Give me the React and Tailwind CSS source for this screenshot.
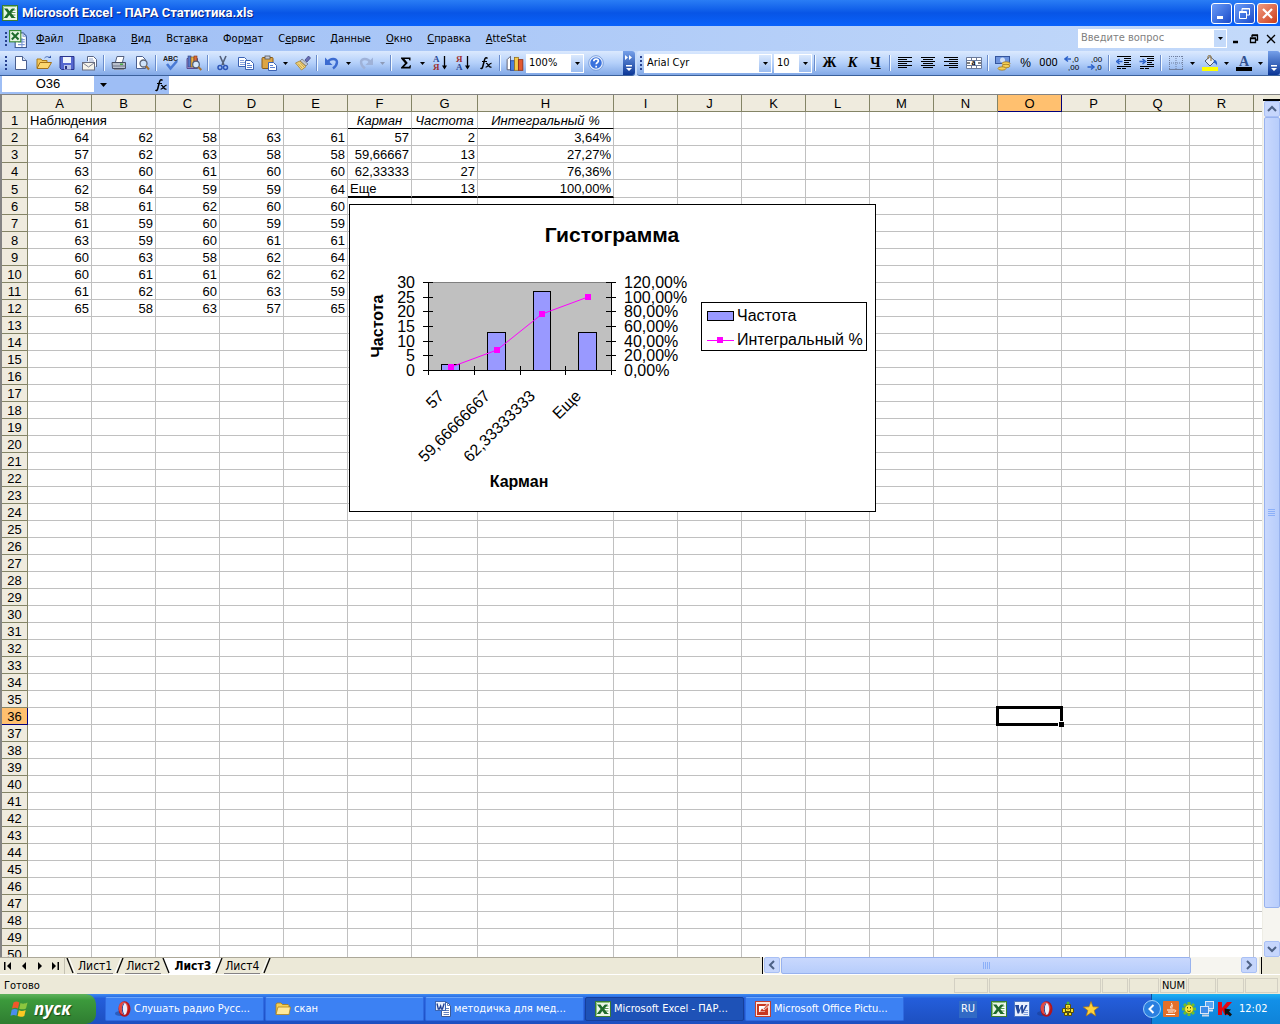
import React from 'react';

const COLUMNS = 'ABCDEFGHIJKLMNOPQRS'.split('');
const ROW_COUNT = 50;
const ACTIVE = { col: 'O', row: 36 };

const observations = [
  [64, 62, 58, 63, 61],
  [57, 62, 63, 58, 58],
  [63, 60, 61, 60, 60],
  [62, 64, 59, 59, 64],
  [58, 61, 62, 60, 60],
  [61, 59, 60, 59, 59],
  [63, 59, 60, 61, 61],
  [60, 63, 58, 62, 64],
  [60, 61, 61, 62, 62],
  [61, 62, 60, 63, 59],
  [65, 58, 63, 57, 65],
];

const frequencies = [
  { F: '57', G: '2', H: '3,64%' },
  { F: '59,66667', G: '13', H: '27,27%' },
  { F: '62,33333', G: '27', H: '76,36%' },
  { F: 'Еще', G: '13', H: '100,00%' },
];

const cellValue = (col, row) => {
  if (row === 1) {
    return { A: 'Наблюдения', F: 'Карман', G: 'Частота', H: 'Интегральный %' }[col];
  }
  const index = COLUMNS.indexOf(col);
  if (index < 5) return observations[row - 2]?.[index];
  return frequencies[row - 2]?.[col];
};

const menuItems = [
  ['', 'Ф', 'айл'],
  ['', 'П', 'равка'],
  ['', 'В', 'ид'],
  ['Вст', 'а', 'вка'],
  ['Фор', 'м', 'ат'],
  ['С', 'е', 'рвис'],
  ['', 'Д', 'анные'],
  ['', 'О', 'кно'],
  ['', 'С', 'правка'],
  ['', 'A', 'tteStat'],
];

/* ---------- icons ---------- */

const Svg = ({ size = 16, children }) => (
  <svg width={size} height={size} viewBox="0 0 16 16" className="shrink-0" aria-hidden="true">
    {children}
  </svg>
);

const ExcelIcon = ({ size }) => (
  <Svg size={size}>
    <rect x="0.5" y="0.5" width="15" height="15" fill="#e9f5e4" stroke="#3a7d34" />
    <path d="M1.5 14.500V1.500H14.500" fill="none" stroke="#8cc57f" />
    <path d="M9 3h5v10H9z" fill="#fff" />
    <path d="M9.500 5h4M9.500 7.500h4M9.500 10h4M9.500 12.500h4" stroke="#5b9f52" />
    <path d="M2 3.500h3.500l2 2.800L9.800 3.500h3.200L9.300 8l3.900 5H9.600L7.300 9.900 5.200 13H1.800L5.600 8z" fill="#1f6b2b" />
  </Svg>
);

const WordIcon = () => (
  <Svg>
    <rect x="0.5" y="0.5" width="15" height="15" fill="#e8f0fd" stroke="#4a76c4" />
    <path d="M1 4l2.500 8.500h1.500L7 7l.5 5.500H9L13.500 4h-2L9 9V4H7.500L5 9V4z" fill="#23489c" />
    <path d="M11 9.500h3M10 11.500h4M9.500 13.500h4.500" stroke="#7f9fdc" />
  </Svg>
);

const WordDocIcon = () => (
  <Svg>
    <path d="M6.500 1.500h6l3 3v11h-9z" fill="#fff" stroke="#3d5a94" />
    <path d="M12.500 1.500v3h3M11 7.500h3M11 9.500h3M8.500 11.500h5.500M8.500 13.500h5.500" fill="none" stroke="#6482bd" />
    <rect x="0.5" y="0.500" width="10" height="9" fill="#e9f0fc" stroke="#3a66b5" />
    <path d="M2 2.500l1.300 5.500h1l1.300-3 .8 3h1L9.200 2.500" fill="none" stroke="#1e3f94" strokeWidth="1.300" />
  </Svg>
);

const SheetDocIcon = () => (
  <Svg size={18}>
    <path d="M5.500 2.500h7l3 3v10h-10z" fill="#fff" stroke="#3f5b91" />
    <path d="M12.500 2.500v3h3M8 8.500h6M8 10.500h6M8 13h6M11.500 7v8" fill="none" stroke="#7b99d6" />
    <rect x="0.5" y="0.5" width="10" height="10" fill="#e6f4e1" stroke="#3a8a35" />
    <path d="M2.500 2.500l6 6M8.500 2.500l-6 6" stroke="#1f6b2b" strokeWidth="1.800" />
  </Svg>
);

const OperaIcon = () => (
  <Svg>
    <ellipse cx="5.500" cy="12.500" rx="5.500" ry="2.500" fill="#17398c" opacity="0.500" />
    <ellipse cx="9.500" cy="8" rx="6" ry="7.700" fill="#b3161b" />
    <ellipse cx="8.500" cy="7" rx="4.800" ry="6.300" fill="#e34a43" />
    <ellipse cx="9.500" cy="8" rx="2.600" ry="6" fill="#e9eefc" />
    <path d="M9.500 2a2.600 6 0 0 0 0 12 5 8 0 0 1 0-12z" fill="#2b3c86" />
  </Svg>
);

const FolderIcon = () => (
  <Svg>
    <path d="M1 13V3.500l1-1.500h4l1.500 1.500H13l1 1V6" fill="#f3cf57" stroke="#a97a12" strokeWidth="0.800" />
    <path d="M1 13.500L3 6h12.500L14 13.500z" fill="#ffe89a" stroke="#b38519" strokeWidth="0.800" />
  </Svg>
);

const PictureManagerIcon = () => (
  <Svg>
    <rect x="0.5" y="0.5" width="15" height="15" fill="#fbe3de" stroke="#c2402f" />
    <rect x="2" y="3" width="11" height="11" fill="#c8371f" />
    <rect x="4" y="5" width="6" height="6" fill="#fff" />
    <path d="M5 10.500l2-3 1.500 1.500L10 7v3.500z" fill="#c8371f" />
    <path d="M8 8l5-6 2 2-6 5z" fill="#d9634f" stroke="#fff" strokeWidth="0.700" />
  </Svg>
);

const NewIcon = () => (
  <Svg>
    <path d="M2.500 1.500h7l4 4v9h-11z" fill="#fff" stroke="#4a5f8f" />
    <path d="M9.500 1.500v4h4" fill="#d4e1f8" stroke="#4a5f8f" />
  </Svg>
);

const OpenIcon = () => (
  <Svg>
    <path d="M1 13V4h4l1 1.500h5V8" fill="#f5c95c" stroke="#a77a1b" />
    <path d="M1 13.500L4 7.500h11.500L12 13.500z" fill="#fbd66f" stroke="#a3701a" />
    <path d="M8.500 3c2-2 4-1.500 5 0" fill="none" stroke="#4a6db5" />
    <path d="M12 3h3V0.500z" fill="#3459a8" />
  </Svg>
);

const SaveIcon = () => (
  <Svg>
    <path d="M1 1.500h14v13H2.500L1 13z" fill="#5567cf" stroke="#2a348c" />
    <rect x="4" y="2" width="8" height="6" fill="#eef3fd" />
    <rect x="5" y="10" width="7" height="4.500" fill="#b9c4ea" />
    <rect x="6" y="11" width="2" height="3" fill="#26307f" />
  </Svg>
);

const MailIcon = () => (
  <Svg>
    <path d="M5.500 6V1.500h6l3 3V12" fill="#fff" stroke="#5a6684" />
    <rect x="0.5" y="7.500" width="12" height="7.500" fill="#f6f4ea" stroke="#6b6f80" />
    <path d="M1 8l5.500 4L12 8" fill="none" stroke="#7d8296" />
    <path d="M7 4h4M7 6h5" stroke="#96a7cc" />
  </Svg>
);

const PrintIcon = () => (
  <Svg>
    <path d="M4.500 7l1.500-5.500h7L11.500 7" fill="#fff" stroke="#55617f" />
    <path d="M1 7.500h13.500v6h-13z" fill="#b9c0cc" stroke="#454d61" />
    <path d="M1.500 11h13" stroke="#6c7588" />
    <rect x="9" y="8.500" width="3" height="1.500" fill="#4ba946" />
    <path d="M3 14.500h10" stroke="#8a90a0" />
  </Svg>
);

const PreviewIcon = () => (
  <Svg>
    <path d="M2.500 1.500h6l3 3v9h-9z" fill="#fff" stroke="#4a5f8f" />
    <circle cx="9.500" cy="8.500" r="3.500" fill="#cfe3fa" stroke="#5a6477" strokeWidth="1.300" />
    <path d="M12 11l3 3.500" stroke="#a8712c" strokeWidth="2" />
  </Svg>
);

const SpellingIcon = () => (
  <Svg>
    <text x="0" y="6" fontSize="7" fontWeight="bold" fill="#222" fontFamily="Liberation Sans, sans-serif">ABC</text>
    <path d="M4 9l3.500 4.500L14 6" fill="none" stroke="#4a7bd6" strokeWidth="2.600" />
  </Svg>
);

const ResearchIcon = () => (
  <Svg>
    <path d="M1 3.500h10.500v10H1z" fill="#b9a4dc" stroke="#5b4a8d" />
    <rect x="2" y="1" width="3" height="11" fill="#5978c8" stroke="#2c3f80" strokeWidth="0.600" />
    <rect x="5" y="2" width="3" height="10" fill="#e7b44c" stroke="#80530f" strokeWidth="0.600" />
    <rect x="8" y="1" width="3" height="10" fill="#d86a3a" stroke="#803413" strokeWidth="0.600" />
    <circle cx="10" cy="9.500" r="3.300" fill="#d7e8fa" stroke="#4f5d77" strokeWidth="1.200" />
    <path d="M12.300 12l3 3" stroke="#a8712c" strokeWidth="2" />
  </Svg>
);

const CutIcon = () => (
  <Svg>
    <path d="M5 1l4 9M11 1L7 10" stroke="#53607a" strokeWidth="1.600" />
    <circle cx="5" cy="12.500" r="2" fill="none" stroke="#2c55b8" strokeWidth="1.500" />
    <circle cx="10.500" cy="12.500" r="2" fill="none" stroke="#2c55b8" strokeWidth="1.500" />
  </Svg>
);

const CopyIcon = () => (
  <Svg>
    <path d="M0.500 2.500h6l2 2v7h-8z" fill="#fff" stroke="#3c63b3" />
    <path d="M2 5.500h4M2 7.500h5M2 9.500h5" stroke="#86a3de" />
    <path d="M7.500 5.500h5l3 3v6h-8z" fill="#fff" stroke="#3c63b3" />
    <path d="M9 8.500h3M9 10.500h5M9 12.500h5" stroke="#5b82d0" />
  </Svg>
);

const PasteIcon = () => (
  <Svg>
    <rect x="1" y="2.500" width="11" height="11" rx="1" fill="#dda544" stroke="#8a5d18" />
    <rect x="4" y="1" width="5" height="3" fill="#c9ccd5" stroke="#555" strokeWidth="0.800" />
    <path d="M7.500 7.500h5l3 3v5h-8z" fill="#fff" stroke="#3c63b3" />
    <path d="M9 10.500h3M9 12.500h5" stroke="#5b82d0" />
  </Svg>
);

const BrushIcon = () => (
  <Svg>
    <path d="M10 5l3.500-4L15.500 3 12 7z" fill="#6a6fb5" stroke="#3a3f7d" strokeWidth="0.700" />
    <path d="M7 4l6 5-2 2-6-5z" fill="#c0c5cf" stroke="#666c7c" strokeWidth="0.700" />
    <path d="M5 6l6 5.500L6.500 15 0.500 8z" fill="#f3d680" stroke="#a37f2c" strokeWidth="0.800" />
    <path d="M3 8.500l4 4.500M5 7.500l4 4.500" stroke="#c9a34b" />
  </Svg>
);

const UndoIcon = () => (
  <Svg>
    <path d="M4 7c2-4 9-4 9 0 0 3-2 5-4 6.500" fill="none" stroke="#3c6bd0" strokeWidth="2.400" />
    <path d="M1 2.500v7.500h7.500z" fill="#3c6bd0" />
  </Svg>
);

const RedoIcon = () => (
  <Svg>
    <path d="M12 7C10 3 3 3 3 7c0 3 2 5 4 6.500" fill="none" stroke="#9fb2d8" strokeWidth="2.400" />
    <path d="M15 2.500v7.500H7.500z" fill="#9fb2d8" />
  </Svg>
);

const SumIcon = () => (
  <Svg>
    <path d="M3 2.500h9.500v3h-1L10.700 4H6.500L9.800 8l-3.800 3.800h5l1-1.600h1l-.5 3.300H3v-1L7 8.300 3 3.500z" fill="#000" />
  </Svg>
);

const SortIcon = ({ top, bottom, topFill, bottomFill }) => (
  <Svg>
    <text x="1" y="7" fontSize="9" fontWeight="bold" fill={topFill} fontFamily="Liberation Serif, serif">{top}</text>
    <text x="1" y="15" fontSize="9" fontWeight="bold" fill={bottomFill} fontFamily="Liberation Serif, serif">{bottom}</text>
    <path d="M12.500 1v12" stroke="#000" strokeWidth="1.300" />
    <path d="M10 10.500h5l-2.500 4z" fill="#000" />
  </Svg>
);

const ChartIcon = () => (
  <Svg size={18}>
    <path d="M1 5l3-3v12H1z" fill="#fff" stroke="#556" strokeWidth="0.800" />
    <rect x="4" y="6" width="3.500" height="8.500" fill="#4d7fdb" stroke="#1e3f94" strokeWidth="0.700" />
    <rect x="7.500" y="3" width="3.500" height="11.500" fill="#f6cb4b" stroke="#94701a" strokeWidth="0.700" />
    <rect x="11" y="5" width="4" height="9.500" fill="#e3582f" stroke="#8a2a10" strokeWidth="0.700" />
  </Svg>
);

const HelpIcon = () => (
  <Svg>
    <circle cx="8" cy="8" r="6.500" fill="#3a72dd" stroke="#e8f1ff" strokeWidth="1.500" />
    <circle cx="8" cy="8" r="7.300" fill="none" stroke="#5d86cf" strokeWidth="0.700" />
    <path d="M5.800 6.300c0-3 4.600-3 4.600-.3 0 1.500-2.200 1.600-2.200 3.300M8.200 10.800v1.700" fill="none" stroke="#fff" strokeWidth="1.700" />
  </Svg>
);

const FunctionIcon = () => (
  <Svg>
    <path d="M9.500 3.500C8 2 7 3 6.500 5L4.800 11.500C4.300 13.500 3.500 14 2.500 13" fill="none" stroke="#000" strokeWidth="1.500" />
    <path d="M4 6.500h5" stroke="#000" />
    <path d="M8 8.500c2.500-1 2 5 5.500 3.500M13.500 8.500c-2-.5-3.500 4-5.800 3.500" fill="none" stroke="#000" strokeWidth="1.300" />
  </Svg>
);

const AlignIcon = ({ d }) => (
  <Svg>
    <path d={d} stroke="#000" />
  </Svg>
);

const MergeIcon = () => (
  <Svg>
    <path d="M0.500 2.500h15v11h-15zM0.500 5.500h15M0.500 10.500h15M5.500 2.500v3M10.500 2.500v3M5.500 10.500v3M10.500 10.500v3" fill="#fff" stroke="#6b7a99" />
    <text x="5.500" y="10" fontSize="8" fontWeight="bold" fontFamily="Liberation Serif, serif">a</text>
    <path d="M1 8h3M12 8h3" stroke="#000" />
  </Svg>
);

const CurrencyIcon = () => (
  <Svg>
    <rect x="0.5" y="1.500" width="14" height="7" fill="#6f94dd" stroke="#34559d" />
    <circle cx="7.500" cy="5" r="2.500" fill="#cfdff8" />
    <ellipse cx="11" cy="8.500" rx="4" ry="1.700" fill="#f5cf56" stroke="#9d7218" strokeWidth="0.700" />
    <ellipse cx="11" cy="11" rx="4" ry="1.700" fill="#f5cf56" stroke="#9d7218" strokeWidth="0.700" />
    <ellipse cx="7" cy="13.500" rx="4" ry="1.700" fill="#f5cf56" stroke="#9d7218" strokeWidth="0.700" />
  </Svg>
);

const DecimalIcon = ({ more }) => (
  <Svg>
    <text x={more ? 8 : 4} y="7" fontSize="8" fontFamily="Liberation Sans, sans-serif">{more ? ',0' : ',00'}</text>
    <text x={more ? 4 : 8} y="15" fontSize="8" fontFamily="Liberation Sans, sans-serif">{more ? ',00' : ',0'}</text>
    <path d={more ? 'M7 4H2M4 1.500L1 4l3 2.500' : 'M0.500 12h5M4 9.500L7 12l-3 2.500'} fill="none" stroke="#2c62c9" strokeWidth="1.500" />
  </Svg>
);

const IndentIcon = ({ more }) => (
  <Svg>
    <path d="M1 1.500h14M8 3.500h7M8 5.500h7M8 7.500h5M8 9.500h7M1 11.500h14M1 13.500h4M6 13.500h4" stroke="#000" />
    <path d={more ? 'M0.500 6.500H5M3.500 4l3 2.500-3 2.500' : 'M6.500 6.500H2M3.500 4l-3 2.500 3 2.500'} fill="none" stroke="#2c62c9" strokeWidth="1.500" />
  </Svg>
);

const BordersIcon = () => (
  <Svg>
    <path d="M1.500 1v13M8 1v13M14.500 1v13M1 1.500h14M1 8h14" stroke="#6f7f9f" strokeDasharray="1 1" />
    <path d="M1 14.500h14" stroke="#6f7f9f" />
  </Svg>
);

const FillIcon = () => (
  <Svg>
    <rect y="12" width="16" height="4" fill="#ff0" />
    <path d="M3 6l5-4.500L13 6 8 11z" fill="#e6ecf7" stroke="#4a5874" />
    <path d="M6 4V1.500C6 0 9 0 9 1.500V6" fill="none" stroke="#8c6a2b" />
    <path d="M12 5c2.500 0 3.500 2 3 5.500-1-2-2-2.500-3.500-3z" fill="#2c62c9" />
  </Svg>
);

const FontColorIcon = () => (
  <Svg>
    <text x="3" y="11" fontSize="14" fontWeight="bold" fill="#31508f" fontFamily="Liberation Serif, serif">A</text>
    <rect y="12" width="16" height="4" fill="#000" />
  </Svg>
);

const WindowsLogo = () => (
  <svg width="20" height="18" viewBox="0 0 20 18" aria-hidden="true">
    <path d="M3.500 2.500C6 1 7.500 1.500 9.300 2.500L8 8.500C6 7.500 4.500 7.500 2 8.500z" fill="#f1572b" />
    <path d="M10.500 3c2 1 4 1 7-.5L16 8.500c-2.500 1.200-4.500 1-6.800.2z" fill="#8cc63f" />
    <path d="M1.700 9.800c2.500-1.200 4-1 6 0l-1.300 6C4.500 14.800 3 14.800.5 15.800z" fill="#4a8df0" />
    <path d="M8.900 10.200c2 1 4 1 6.800-.3l-1.400 6c-2.500 1.200-4.500 1-6.700.1z" fill="#fdc823" />
  </svg>
);

const StarIcon = () => (
  <Svg>
    <path d="M8 0.500l2 5.300 5.700.2-4.500 3.500 1.600 5.500L8 11.800 3.200 15l1.600-5.500L.3 6l5.700-.2z" fill="#ffd23c" stroke="#b07a10" strokeWidth="0.700" />
  </Svg>
);

const RobotIcon = () => (
  <Svg>
    <path d="M5.500 3.500h5v4h-5zM2.500 7.500h3v4h-3zM10.500 7.500h3v4h-3zM5.500 7.500h5v3h-5zM4.500 11.500h3v3h-3zM8.500 11.500h3v3h-3z" fill="#f4e02c" stroke="#57500a" />
    <circle cx="8" cy="2" r="1.500" fill="#49b53b" />
    <path d="M8 5v4" stroke="#b58a10" strokeWidth="1.500" />
  </Svg>
);

const JavaIcon = () => (
  <Svg>
    <rect width="16" height="16" rx="1" fill="#e2702a" />
    <path d="M8 2c3 2-2 3 0 5.500M10 4.500c-2 1-1 2-1 3" fill="none" stroke="#fff" />
    <path d="M4 9h7.500M5 11h5.500M3 13.500h9M11.500 9c2 0 1.500 2-.5 2" fill="none" stroke="#fff" />
  </Svg>
);

const FlowerIcon = () => (
  <Svg>
    <path d="M8 1v14M1 8h14M3 3l10 10M13 3L3 13" stroke="#6bbf2e" strokeWidth="3" />
    <circle cx="8" cy="8" r="4.300" fill="#f9ec3f" stroke="#8b9b16" strokeWidth="0.700" />
    <path d="M6.500 6v1.500M9.500 6v1.500M6 9.500c1 1.300 3 1.300 4 0" fill="none" stroke="#5a5200" />
  </Svg>
);

const NetworkIcon = () => (
  <Svg>
    <rect x="6.500" y="0.500" width="8" height="7" fill="#5aa5f2" stroke="#dbe6f5" />
    <path d="M9 9.500h5" stroke="#dbe6f5" strokeWidth="2" />
    <rect x="1.500" y="5.500" width="8" height="7" fill="#3f8de8" stroke="#dbe6f5" />
    <path d="M3 14.500h7" stroke="#cbd6e8" strokeWidth="2" />
  </Svg>
);

const AntivirusIcon = () => (
  <Svg>
    <path d="M1 1h4v6l5-6h5L9 8l3 6H8L5 9v5H1z" fill="#e30613" />
    <path d="M7.500 7.500l6.500 1-2 2 3 3-2 2-3-3-2 2z" fill="#111" />
  </Svg>
);

/* ---------- shared controls ---------- */

const DownTriangle = ({ color = '#000' }) => (
  <svg width="5" height="3" viewBox="0 0 5 3" aria-hidden="true">
    <path d="M0 0h5L2.500 3z" fill={color} />
  </svg>
);

const ToolButton = ({ label, children }) => (
  <button type="button" aria-label={label} className="flex h-[23px] w-[23px] shrink-0 items-center justify-center">
    {children}
  </button>
);

const ArrowButton = ({ label, color }) => (
  <button type="button" aria-label={label} className="flex h-[23px] w-[11px] shrink-0 items-center justify-center">
    <DownTriangle color={color} />
  </button>
);

const Separator = () => (
  <span className="flex h-4 w-[6px] shrink-0 justify-center">
    <span className="w-px bg-[#6a8ccb]" />
    <span className="w-px bg-[#f1f9ff]" />
  </span>
);

const Grip = () => (
  <span className="flex w-[2px] shrink-0 flex-col gap-[2px]">
    {[0, 1, 2, 3].map((dot) => (
      <span key={dot} className="h-[2px] bg-[#27418f]" />
    ))}
  </span>
);

const ToolSelect = ({ label, value, className }) => (
  <span className={`flex h-[19px] shrink-0 bg-white p-px ${className}`}>
    <select aria-label={label} defaultValue={value} className="min-w-0 flex-1 appearance-none bg-white pl-[2px] text-[11px] leading-4 outline-none">
      <option>{value}</option>
    </select>
    <span className="flex w-[12px] items-center justify-center bg-gradient-to-b from-[#dbe9fd] to-[#9cbdf0]">
      <DownTriangle />
    </span>
  </span>
);

const ToolbarOptions = ({ double }) => (
  <button
    type="button"
    aria-label="Параметры панелей инструментов"
    className="ml-auto flex h-full w-[12px] shrink-0 flex-col items-center justify-end gap-[5px] rounded-r-[3px] bg-gradient-to-b from-[#76a0ea] to-[#0a3596] pb-[3px]"
  >
    {double && (
      <svg width="8" height="5" viewBox="0 0 8 5" aria-hidden="true">
        <path d="M0 0l3 2.500L0 5zM4 0l3 2.500L4 5z" fill="#fff" />
      </svg>
    )}
    <svg width="7" height="7" viewBox="0 0 7 7" aria-hidden="true">
      <path d="M0 0h6v1.500H0zM0 3h6L3 6z" fill="#fff" />
    </svg>
  </button>
);

const CaptionButton = ({ label, className, children }) => (
  <button type="button" aria-label={label} className={`flex h-[21px] w-[21px] items-center justify-center rounded-[3px] border border-white ${className}`}>
    <svg width="15" height="15" viewBox="0 0 15 15" fill="none" stroke="#fff" aria-hidden="true">
      {children}
    </svg>
  </button>
);

const ScrollButton = ({ label, d }) => (
  <button type="button" aria-label={label} className="flex h-[16px] w-[16px] shrink-0 items-center justify-center rounded-[2px] border border-[#a9c0f5] bg-[#c6d6fc]">
    <svg width="10" height="10" viewBox="0 0 10 10" fill="none" stroke="#4d6185" strokeWidth="2" aria-hidden="true">
      <path d={d} />
    </svg>
  </button>
);

/* ---------- top of the window ---------- */

const TitleBar = () => (
  <header className="flex h-[26px] shrink-0 items-center bg-gradient-to-b from-[#2a7df5] via-[#0855e6] to-[#0a62fb] pr-[2px] pl-[2px]">
    <ExcelIcon />
    <h1 className="ml-[4px] flex-1 truncate font-['Trebuchet_MS','Roboto',sans-serif] text-[13px] font-bold text-white [text-shadow:1px_1px_#0a1f7a]">
      Microsoft Excel - ПАРА Статистика.xls
    </h1>
    <div className="flex gap-[2px]">
      <CaptionButton label="Свернуть" className="bg-gradient-to-br from-[#6b9cf8] to-[#1c49c9]">
        <path d="M3 11.500h6" strokeWidth="3" />
      </CaptionButton>
      <CaptionButton label="Восстановить" className="bg-gradient-to-br from-[#6b9cf8] to-[#1c49c9]">
        <path d="M5 5V2.500h7.500V9H10M5 3h8M2.500 5.500h7v7h-7zM2 6.500h8" />
      </CaptionButton>
      <CaptionButton label="Закрыть" className="bg-gradient-to-br from-[#f09a80] to-[#cc3a10]">
        <path d="M3 3l9 9M12 3l-9 9" strokeWidth="2.200" />
      </CaptionButton>
    </div>
  </header>
);

const MenuBar = () => (
  <nav className="flex h-[25px] shrink-0 items-center bg-gradient-to-r from-[#9ebef5] to-[#c4dafa] pr-[3px] pl-[5px] text-[11px]">
    <Grip />
    <button type="button" aria-label="Книга" className="mr-px ml-[2px]">
      <SheetDocIcon />
    </button>
    {menuItems.map(([before, key, after]) => (
      <button key={before + key + after} type="button" className="pr-[7px] pl-2 leading-[18px] whitespace-nowrap">
        {before}
        <span className="underline">{key}</span>
        {after}
      </button>
    ))}
    <div className="ml-auto flex h-[19px] bg-white p-px">
      <input aria-label="Введите вопрос" placeholder="Введите вопрос" className="w-[135px] pl-[2px] outline-none placeholder:text-[#7f7f7f]" />
      <button type="button" aria-label="Список вопросов" className="flex w-[12px] items-center justify-center bg-[#c4dafa]">
        <DownTriangle />
      </button>
    </div>
    <div className="ml-[4px] flex gap-[5px]">
      {[
        ['Свернуть книгу', 'M1 8.500h5M1 7.500h5'],
        ['Восстановить книгу', 'M3 3V1.500h5.500V6H7M3 1h6M1.500 4.500h5v4h-5zM1 4h6'],
        ['Закрыть книгу', 'M1 1l8 8M9 1l-8 8'],
      ].map(([label, d]) => (
        <button key={label} type="button" aria-label={label} className="flex w-[12px] justify-center">
          <svg width="10" height="10" viewBox="0 0 10 10" fill="none" stroke="#000" strokeWidth="1.300" aria-hidden="true">
            <path d={d} />
          </svg>
        </button>
      ))}
    </div>
  </nav>
);

const StandardToolbar = () => (
  <div className="flex h-[25px] w-[635px] shrink-0 items-center rounded-r-[3px] border-b border-[#3b619c] bg-gradient-to-b from-[#dbe9fe] via-[#b4d0fa] to-[#82a8e6] pl-[5px]">
    <Grip />
    <span className="w-[2px]" />
    <ToolButton label="Создать"><NewIcon /></ToolButton>
    <ToolButton label="Открыть"><OpenIcon /></ToolButton>
    <ToolButton label="Сохранить"><SaveIcon /></ToolButton>
    <ToolButton label="Сообщение"><MailIcon /></ToolButton>
    <Separator />
    <ToolButton label="Печать"><PrintIcon /></ToolButton>
    <ToolButton label="Предварительный просмотр"><PreviewIcon /></ToolButton>
    <Separator />
    <ToolButton label="Орфография"><SpellingIcon /></ToolButton>
    <ToolButton label="Справочные материалы"><ResearchIcon /></ToolButton>
    <Separator />
    <ToolButton label="Вырезать"><CutIcon /></ToolButton>
    <ToolButton label="Копировать"><CopyIcon /></ToolButton>
    <ToolButton label="Вставить"><PasteIcon /></ToolButton>
    <ArrowButton label="Параметры вставки" />
    <ToolButton label="Формат по образцу"><BrushIcon /></ToolButton>
    <Separator />
    <ToolButton label="Отменить"><UndoIcon /></ToolButton>
    <ArrowButton label="Список отмены" />
    <ToolButton label="Вернуть"><RedoIcon /></ToolButton>
    <ArrowButton label="Список возврата" color="#8d9bb8" />
    <Separator />
    <ToolButton label="Автосумма"><SumIcon /></ToolButton>
    <ArrowButton label="Функции автосуммы" />
    <ToolButton label="Сортировка по возрастанию">
      <SortIcon top="А" bottom="Я" topFill="#2b4a94" bottomFill="#a03030" />
    </ToolButton>
    <ToolButton label="Сортировка по убыванию">
      <SortIcon top="Я" bottom="А" topFill="#a03030" bottomFill="#2b4a94" />
    </ToolButton>
    <ToolButton label="Вставка функции"><FunctionIcon /></ToolButton>
    <Separator />
    <ToolButton label="Мастер диаграмм"><ChartIcon /></ToolButton>
    <ToolSelect label="Масштаб" value="100%" className="w-[58px]" />
    <ToolButton label="Справка"><HelpIcon /></ToolButton>
    <ToolbarOptions double />
  </div>
);

const FormattingToolbar = () => (
  <div className="ml-[2px] flex h-[25px] min-w-0 flex-1 items-center rounded-l-[3px] border-b border-[#3b619c] bg-gradient-to-b from-[#dbe9fe] via-[#b4d0fa] to-[#82a8e6] pl-[3px]">
    <Grip />
    <span className="w-[2px]" />
    <ToolSelect label="Шрифт" value="Arial Cyr" className="w-[128px]" />
    <span className="w-[2px]" />
    <ToolSelect label="Размер" value="10" className="w-[38px]" />
    <Separator />
    <ToolButton label="Полужирный">
      <span className="font-['Liberation_Serif',serif] text-[14px] leading-4 font-bold">Ж</span>
    </ToolButton>
    <ToolButton label="Курсив">
      <span className="font-['Liberation_Serif',serif] text-[14px] leading-4 font-bold italic">К</span>
    </ToolButton>
    <ToolButton label="Подчеркнутый">
      <span className="font-['Liberation_Serif',serif] text-[14px] leading-4 font-bold underline">Ч</span>
    </ToolButton>
    <Separator />
    <ToolButton label="По левому краю">
      <AlignIcon d="M1 2.500h14M1 4.500h9M1 6.500h14M1 8.500h9M1 10.500h14M1 12.500h9" />
    </ToolButton>
    <ToolButton label="По центру">
      <AlignIcon d="M1 2.500h14M3 4.500h10M1 6.500h14M3 8.500h10M1 10.500h14M3 12.500h10" />
    </ToolButton>
    <ToolButton label="По правому краю">
      <AlignIcon d="M1 2.500h14M6 4.500h9M1 6.500h14M6 8.500h9M1 10.500h14M6 12.500h9" />
    </ToolButton>
    <ToolButton label="Объединить и поместить в центре"><MergeIcon /></ToolButton>
    <Separator />
    <ToolButton label="Денежный формат"><CurrencyIcon /></ToolButton>
    <ToolButton label="Процентный формат">
      <span className="font-['Liberation_Sans_Narrow','Liberation_Sans',sans-serif] text-[12px] leading-4">%</span>
    </ToolButton>
    <ToolButton label="Формат с разделителями">
      <span className="font-['Liberation_Sans_Narrow','Roboto',sans-serif] text-[11px] leading-4">000</span>
    </ToolButton>
    <ToolButton label="Увеличить разрядность"><DecimalIcon more /></ToolButton>
    <ToolButton label="Уменьшить разрядность"><DecimalIcon /></ToolButton>
    <Separator />
    <ToolButton label="Уменьшить отступ"><IndentIcon /></ToolButton>
    <ToolButton label="Увеличить отступ"><IndentIcon more /></ToolButton>
    <Separator />
    <ToolButton label="Границы"><BordersIcon /></ToolButton>
    <ArrowButton label="Виды границ" />
    <ToolButton label="Цвет заливки"><FillIcon /></ToolButton>
    <ArrowButton label="Цвета заливки" />
    <ToolButton label="Цвет шрифта"><FontColorIcon /></ToolButton>
    <ArrowButton label="Цвета шрифта" />
    <ToolbarOptions />
  </div>
);

const FormulaBar = () => (
  <div className="flex h-[18px] shrink-0 bg-[#9ebef5] pl-[2px]">
    <input aria-label="Имя" defaultValue="O36" className="h-4 w-[92px] bg-white text-center font-['Liberation_Sans',sans-serif] text-[13px] outline-none" />
    <button type="button" aria-label="Список имен" className="flex w-[18px] items-center justify-center">
      <svg width="7" height="4" viewBox="0 0 7 4" aria-hidden="true">
        <path d="M0 0h7L3.500 4z" />
      </svg>
    </button>
    <button type="button" aria-label="Вставить функцию" className="ml-[41px] flex w-[16px] items-center">
      <FunctionIcon />
    </button>
    <input aria-label="Строка формул" className="min-w-0 flex-1 bg-white outline-none" />
  </div>
);

/* ---------- sheet ---------- */

const bars = [
  { x: 92.5, w: 18, top: 160.5, cx: 102, cy: 163, label: '57' },
  { x: 138.5, w: 18, top: 128.5, cx: 148, cy: 146, label: '59,66666667' },
  { x: 184.5, w: 17, top: 87.5, cx: 193, cy: 110, label: '62,33333333' },
  { x: 229.5, w: 18, top: 128.5, cx: 239, cy: 93, label: 'Еще' },
];
const tickYs = [166.5, 151.5, 137.5, 122.5, 107.5, 93.5, 78.5];
const tickXs = [79.5, 125.5, 171.5, 216.5, 262.5];

const HistogramChart = () => (
  <svg
    width="527"
    height="308"
    viewBox="0 0 527 308"
    role="img"
    aria-label="Гистограмма"
    className="absolute top-[109px] left-[347px] font-['Liberation_Sans',sans-serif] text-[16px]"
  >
    <rect x="0.5" y="0.5" width="526" height="307" fill="#fff" stroke="#000" />
    <text x="263" y="38" textAnchor="middle" fontSize="21" fontWeight="bold">Гистограмма</text>

    <g shapeRendering="crispEdges">
      <rect x="79.500" y="78.500" width="183" height="88" fill="#c0c0c0" stroke="#808080" />
      {bars.map((bar) => (
        <rect key={bar.label} x={bar.x} y={bar.top} width={bar.w} height={166.5 - bar.top} fill="#9999ff" stroke="#000" />
      ))}
      <path d="M79.500 78v89M262.500 78v89M79 166.500h184" stroke="#000" />
      {tickYs.map((y) => (
        <path key={y} d={`M74 ${y}h10M257 ${y}h10`} stroke="#000" />
      ))}
      {tickXs.map((x) => (
        <path key={x} d={`M${x} 162v9`} stroke="#000" />
      ))}
    </g>

    <polyline points={bars.map((bar) => `${bar.cx},${bar.cy}`).join(' ')} fill="none" stroke="#ff00ff" />
    {bars.map((bar) => (
      <rect key={bar.label} x={bar.cx - 3} y={bar.cy - 3} width="6" height="6" fill="#ff00ff" />
    ))}

    {tickYs.map((y, i) => (
      <g key={y}>
        <text x="66" y={y + 5} textAnchor="end">{i * 5}</text>
        <text x="275" y={y + 5}>{`${i * 20},00%`}</text>
      </g>
    ))}
    {bars.map((bar) => (
      <text key={bar.label} transform={`translate(${bar.cx - 6} 193) rotate(-45)`} textAnchor="end">
        {bar.label}
      </text>
    ))}
    <text transform="translate(34 122) rotate(-90)" textAnchor="middle" fontWeight="bold">Частота</text>
    <text x="170" y="283" textAnchor="middle" fontWeight="bold">Карман</text>

    <rect x="352.500" y="98.500" width="165" height="48" fill="#fff" stroke="#000" />
    <rect x="358.500" y="107.500" width="26" height="9" fill="#9999ff" stroke="#000" />
    <text x="388" y="117">Частота</text>
    <path d="M358 136.500h27" stroke="#ff00ff" />
    <rect x="368" y="133" width="6" height="6" fill="#ff00ff" />
    <text x="388" y="141">Интегральный %</text>
  </svg>
);

const Cell = ({ col, row }) => {
  const value = cellValue(col, row);
  const inReport = 'FGH'.includes(col);
  const active = col === ACTIVE.col && row === ACTIVE.row;

  let align = 'text-right';
  if (row === 1) align = inReport ? 'text-center italic' : 'text-left';
  if (value === 'Еще') align = 'text-left';

  let bottom = 'border-b border-b-[#c0c0c0]';
  if (inReport && row === 1) bottom = 'border-b border-b-black';
  if (inReport && row === 5) bottom = 'border-b-2 border-b-black';

  return (
    <td
      colSpan={col === 'A' && row === 1 ? 2 : 1}
      className={`border-r border-r-[#c0c0c0] px-[2px] pt-[2px] pb-0 whitespace-nowrap ${align} ${bottom} ${active ? 'relative' : ''}`}
    >
      {value}
      {active && (
        <span className="absolute -inset-[2px] border-[3px] border-black">
          <span className="absolute -right-[4px] -bottom-[4px] h-[6px] w-[6px] border-t border-l border-white bg-black" />
        </span>
      )}
    </td>
  );
};

const Sheet = () => (
  <div className="relative min-w-0 flex-1 overflow-hidden bg-white">
    <table className="w-[1316px] table-fixed border-separate border-spacing-0 font-['Liberation_Sans',sans-serif] text-[13px] leading-[14px]">
      <colgroup>
        <col className="w-[26px]" />
        {COLUMNS.map((col) => (
          <col key={col} className={col === 'G' ? 'w-[66px]' : col === 'H' ? 'w-[136px]' : 'w-[64px]'} />
        ))}
      </colgroup>
      <thead>
        <tr className="h-[17px]">
          <td className="border-r border-b border-[#848466] bg-[#efebde] p-0" />
          {COLUMNS.map((col) => (
            <th
              key={col}
              scope="col"
              className={`border-r border-b px-0 pt-[2px] pb-0 text-center font-normal ${
                col === ACTIVE.col ? 'border-[#00007b] bg-[#ffc06f]' : 'border-[#848466] bg-[#efebde]'
              }`}
            >
              {col}
            </th>
          ))}
        </tr>
      </thead>
      <tbody>
        {Array.from({ length: ROW_COUNT }, (_, i) => i + 1).map((row) => (
          <tr key={row} className={row === 5 ? 'h-[18px]' : 'h-[17px]'}>
            <th
              scope="row"
              className={`border-r border-b px-0 pt-[2px] pb-0 text-center font-normal ${
                row === ACTIVE.row ? 'border-[#00007b] bg-[#ffc06f]' : 'border-[#848466] bg-[#efebde]'
              }`}
            >
              {row}
            </th>
            {COLUMNS.filter((col) => !(row === 1 && col === 'B')).map((col) => (
              <Cell key={col} col={col} row={row} />
            ))}
          </tr>
        ))}
      </tbody>
    </table>
    <HistogramChart />
  </div>
);

const VerticalScrollbar = () => (
  <div className="flex w-[18px] shrink-0 flex-col items-center border-l border-[#eeede5] bg-[#f6f5f0]">
    <span className="h-[6px] w-full shrink-0 border-b-2 border-black bg-[#ece9d8]" />
    <ScrollButton label="Вверх" d="M1 7l4-4 4 4" />
    <div className="flex w-[16px] flex-1 flex-col">
      <div className="flex basis-[96%] flex-col items-center justify-center gap-px rounded-[2px] border border-[#98b2ee] bg-gradient-to-r from-[#c9d8fd] to-[#b7cdfb]">
        {[0, 1, 2, 3].map((line) => (
          <span key={line} className="h-px w-[7px] bg-[#8cb0f8]" />
        ))}
      </div>
    </div>
    <ScrollButton label="Вниз" d="M1 3l4 4 4-4" />
  </div>
);

const TabEdge = ({ left, right, d }) => (
  <svg width="12" height="16" viewBox="0 0 12 16" className="shrink-0" aria-hidden="true">
    <path d={d === 'up' ? 'M0 0h10L4 15H0z' : 'M0 0h2l6 15H0z'} fill={left} />
    <path d={d === 'up' ? 'M10 0h2v16H4z' : 'M2 0h10v16H8z'} fill={right} />
    <path d={d === 'up' ? 'M8 0L2 15' : 'M4 0l6 15'} stroke="#fff" />
    <path d={d === 'up' ? 'M10 0L4 15' : 'M2 0l6 15'} stroke="#000" strokeWidth="1.300" />
  </svg>
);

const SheetTab = ({ name, active }) => (
  <button
    type="button"
    className={`h-4 px-px text-[12px] leading-4 ${active ? 'bg-white font-bold' : 'border-b border-[#848284] bg-[#ece9d8]'}`}
  >
    {name}
  </button>
);

const SheetTabs = () => (
  <div className="flex h-[17px] w-[760px] shrink-0 items-start border-t border-[#aca899] bg-[#ece9d8]">
    {[
      ['Первый лист', 'M0 0h1.500v8H0zM7 0v8L3 4z'],
      ['Предыдущий лист', 'M6 0v8L2 4z'],
      ['Следующий лист', 'M2 0v8l4-4z'],
      ['Последний лист', 'M0 0v8l4-4zM5.500 0H7v8H5.500z'],
    ].map(([label, d]) => (
      <button key={label} type="button" aria-label={label} className="flex h-4 w-4 items-center justify-center">
        <svg width="8" height="8" viewBox="0 0 8 8" aria-hidden="true">
          <path d={d} />
        </svg>
      </button>
    ))}
    <span className="h-4 w-px bg-[#c5c2b2]" />
    <TabEdge d="down" left="#ece9d8" right="#ece9d8" />
    <SheetTab name="Лист1" />
    <TabEdge d="up" left="#ece9d8" right="#ece9d8" />
    <SheetTab name="Лист2" />
    <TabEdge d="down" left="#ece9d8" right="#fff" />
    <SheetTab name="Лист3" active />
    <TabEdge d="up" left="#fff" right="#ece9d8" />
    <SheetTab name="Лист4" />
    <TabEdge d="up" left="#ece9d8" right="#ece9d8" />
  </div>
);

const HorizontalScrollbar = () => (
  <div className="flex min-w-0 flex-1 bg-[#f6f5f0]">
    <span className="mr-px w-[3px] border-r border-black bg-[#ece9d8]" />
    <ScrollButton label="Влево" d="M7 1L3 5l4 4" />
    <div className="flex flex-1">
      <div className="ml-px flex basis-[89%] items-center justify-center gap-px rounded-[2px] border border-[#98b2ee] bg-gradient-to-b from-[#c9d8fd] to-[#b7cdfb]">
        {[0, 1, 2, 3].map((line) => (
          <span key={line} className="h-[7px] w-px bg-[#8cb0f8]" />
        ))}
      </div>
    </div>
    <ScrollButton label="Вправо" d="M3 1l4 4-4 4" />
    <span className="ml-[2px] w-[3px] border-r border-black bg-[#ece9d8]" />
    <span className="w-[18px] bg-[#ece9d8]" />
  </div>
);

const StatusBar = () => (
  <footer className="flex h-[20px] shrink-0 items-center gap-px border-t border-white bg-[#ece9d8] pt-[2px] pr-[2px] pl-[4px] text-[11px] leading-4">
    <span className="flex-1">Готово</span>
    <span className="h-[15px] w-[34px] border border-[#d3d0c3]" />
    <span className="h-[15px] w-[112px] border border-[#d3d0c3]" />
    <span className="h-[15px] w-[26px] border border-[#d3d0c3]" />
    <span className="h-[15px] w-[30px] border border-[#d3d0c3]" />
    <span className="h-[15px] w-[27px] border border-[#d3d0c3] text-center leading-[14px]">NUM</span>
    <span className="h-[15px] w-[28px] border border-[#d3d0c3]" />
    <span className="h-[15px] w-[27px] border border-[#d3d0c3]" />
    <span className="h-[15px] w-[33px] border border-[#d3d0c3]" />
  </footer>
);

/* ---------- taskbar ---------- */

const tasks = [
  { label: 'Слушать радио Русс...', icon: OperaIcon },
  { label: 'скан', icon: FolderIcon },
  { label: 'методичка для мед...', icon: WordDocIcon },
  { label: 'Microsoft Excel - ПАР...', icon: ExcelIcon, active: true },
  { label: 'Microsoft Office Pictu...', icon: PictureManagerIcon },
];

const quickIcons = [
  { label: 'Excel', icon: ExcelIcon },
  { label: 'Word', icon: WordIcon },
  { label: 'Opera', icon: OperaIcon },
  { label: 'Робот', icon: RobotIcon },
  { label: 'Избранное', icon: StarIcon },
];

const Taskbar = () => (
  <div className="flex h-[30px] shrink-0 bg-gradient-to-b from-[#3f8cf3] via-[#245edb] via-15% to-[#1d4fc0] text-[11px] text-white">
    <button
      type="button"
      className="flex w-[96px] shrink-0 items-center gap-[4px] rounded-r-[10px] bg-gradient-to-b from-[#5eb35c] via-[#3c9a3c] via-20% to-[#2f7d31] pl-[10px] font-['Open_Sans',sans-serif] text-[17px] leading-5 font-bold italic [text-shadow:1px_1px_1px_#1a4a1a]"
    >
      <WindowsLogo />
      пуск
    </button>
    <div className="ml-[9px] flex min-w-0 flex-1 items-center gap-px">
      {tasks.map((task) => (
        <button
          key={task.label}
          type="button"
          className={`flex h-[24px] w-[159px] min-w-0 items-center gap-[3px] rounded-[2px] border pl-[9px] ${
            task.active ? 'border-[#163f9a] bg-[#1e52b7]' : 'border-[#2f6ae0] border-t-[#6aa5fb] bg-[#3c81f3]'
          }`}
        >
          <task.icon />
          <span className="truncate">{task.label}</span>
        </button>
      ))}
    </div>
    <div className="flex shrink-0 items-center">
      <button type="button" className="mr-[10px] h-[17px] w-[18px] bg-[#316ac5] leading-4">RU</button>
      {quickIcons.map((item) => (
        <button key={item.label} type="button" aria-label={item.label} className="flex w-[23px] justify-center">
          <item.icon />
        </button>
      ))}
      <span className="w-[49px]" />
    </div>
    <div className="relative flex w-[129px] shrink-0 items-center gap-[2px] border-l border-[#0b4ea0] bg-gradient-to-b from-[#1fb1f3] via-[#1290e8] via-20% to-[#0f83d8] pl-[11px]">
      <button type="button" aria-label="Показать значки" className="absolute top-[6px] -left-[9px]">
        <svg width="18" height="18" viewBox="0 0 18 18" fill="none" aria-hidden="true">
          <circle cx="9" cy="9" r="8.500" fill="#2a7fe0" stroke="#9ed0fb" />
          <path d="M10.500 5L6.500 9l4 4" stroke="#fff" strokeWidth="2" />
        </svg>
      </button>
      <JavaIcon />
      <FlowerIcon />
      <NetworkIcon />
      <AntivirusIcon />
      <time className="ml-[4px]">12:02</time>
    </div>
  </div>
);

const App = () => (
  <div className="flex h-screen flex-col overflow-hidden bg-[#ece9d8] font-['Tahoma','DejaVu_Sans_Condensed',sans-serif] text-black">
    <TitleBar />
    <MenuBar />
    <div className="flex shrink-0 bg-[#c4dafa]">
      <StandardToolbar />
      <FormattingToolbar />
    </div>
    <FormulaBar />
    <main className="flex min-h-0 flex-1 flex-col">
      <div className="flex min-h-0 flex-1 border-t border-l-2 border-[#848484]">
        <Sheet />
        <VerticalScrollbar />
      </div>
      <div className="flex h-[17px] shrink-0">
        <SheetTabs />
        <HorizontalScrollbar />
      </div>
    </main>
    <StatusBar />
    <Taskbar />
  </div>
);

export default App;
